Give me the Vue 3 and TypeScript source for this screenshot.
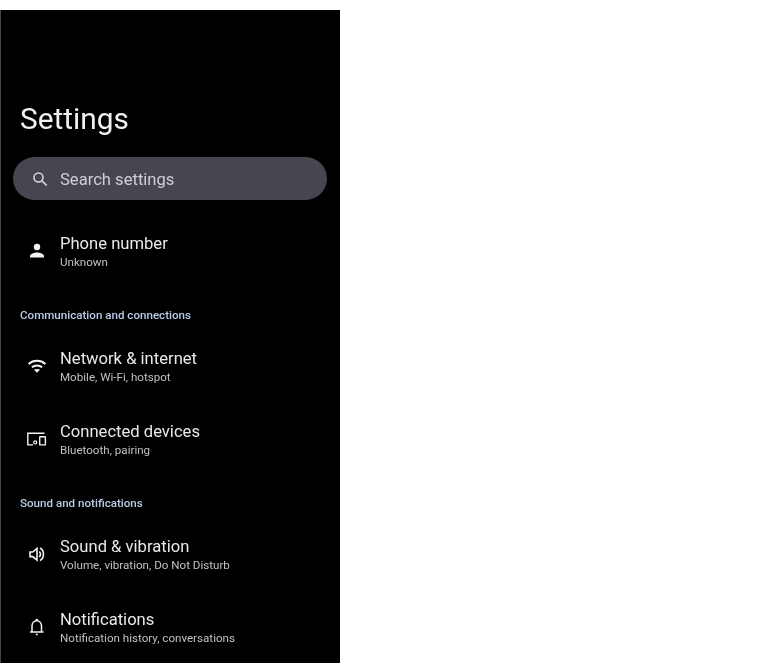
<script setup lang="ts">
interface Row { title: string; sub: string; icon: string }
const account: Row = { title: 'Phone number', sub: 'Unknown', icon: 'person' }
const groups: { label: string; rows: Row[] }[] = [
  { label: 'Communication and connections', rows: [
    { title: 'Network & internet', sub: 'Mobile, Wi-Fi, hotspot', icon: 'wifi' },
    { title: 'Connected devices', sub: 'Bluetooth, pairing', icon: 'devices' },
  ] },
  { label: 'Sound and notifications', rows: [
    { title: 'Sound & vibration', sub: 'Volume, vibration, Do Not Disturb', icon: 'sound' },
    { title: 'Notifications', sub: 'Notification history, conversations', icon: 'bell' },
  ] },
]
</script>

<template>
  <div class="page">
    <main class="phone">
      <h1 class="title">Settings</h1>
      <div class="search">
        <svg class="search-icon" viewBox="0 0 20 20" width="20" height="20" fill="none" stroke="#d6d6da" stroke-width="1.6">
          <circle cx="8.500" cy="8.500" r="4.500" />
          <path d="M11.800 11.800 16.800 16.500" />
        </svg>
        <span class="search-text">Search settings</span>
      </div>

      <div class="row first">
        <div class="icon"><svg viewBox="0 0 20 20" width="20" height="20" fill="#f4f4f6"><circle cx="10" cy="6" r="3.200" /><path d="M3 16.500v-1.300c0-2.400 4.500-3.600 7-3.600s7 1.200 7 3.600v1.300z" /></svg></div>
        <div class="text"><div class="row-title">{{ account.title }}</div><div class="row-sub">{{ account.sub }}</div></div>
      </div>

      <section v-for="g in groups" :key="g.label" class="group">
        <div class="label">{{ g.label }}</div>
        <div v-for="r in g.rows" :key="r.title" class="row">
          <div class="icon">
            <svg v-if="r.icon === 'wifi'" viewBox="0 0 20 20" width="20" height="20" fill="none" stroke="#f4f4f6" stroke-width="2">
              <path d="M1.600 8C6.300 3.700 13.700 3.700 18.400 8" />
              <path d="M4.900 11.300c2.900-2.500 7.300-2.500 10.200 0" />
              <path d="M10 16.800 7 13.800c1.700-1.200 4.300-1.200 6 0z" fill="#f4f4f6" stroke="none" />
            </svg>
            <svg v-else-if="r.icon === 'devices'" viewBox="0 0 20 20" width="20" height="20" fill="none" stroke="#f4f4f6" stroke-width="1.400">
              <path d="M17.500 4.200H.8v11.700H6" />
              <circle cx="8.200" cy="13.400" r="1.500" stroke-width="1.200" />
              <rect x="12.700" y="7.800" width="5.700" height="8.100" rx=".5" />
            </svg>
            <svg v-else-if="r.icon === 'sound'" viewBox="0 0 20 20" width="20" height="20" fill="none" stroke="#f4f4f6" stroke-width="1.600">
              <path d="M3 8v4.600h2.700L10 16V4.500L5.700 8z" />
              <path d="M12.300 7.500c1.300 1.500 1.300 4 0 5.500" />
              <path d="M13 4c4.600 2.600 4.600 10 0 12.600" />
            </svg>
            <svg v-else viewBox="0 0 20 20" width="20" height="20" fill="none" stroke="#f4f4f6" stroke-width="1.500">
              <path d="M3 15h13.500M5 15V9c0-3 2-5.300 4.700-5.300S14.500 6 14.500 9v6" />
              <path d="M9 3.200c.3-.8 1.300-.8 1.600 0M8.800 17.400h2" />
            </svg>
          </div>
          <div class="text"><div class="row-title">{{ r.title }}</div><div class="row-sub">{{ r.sub }}</div></div>
        </div>
      </section>
    </main>
  </div>
</template>

<style>
html, body { background: #fff; }
</style>

<style scoped>
.page { padding-top: 10px; height: 672px; box-sizing: border-box; background: #fff; font-family: Roboto, "Liberation Sans", sans-serif; }
.phone { width: 340px; height: 653px; background: #000; overflow: hidden; box-sizing: border-box; border-left: 1px solid #444; filter: blur(.3px); }
.title { margin: 91px 0 0 19px; font-size: 29.800px; line-height: 36px; font-weight: 400; color: #f1f1f3; }
.search { margin: 20px 13px 0 12px; height: 43px; border-radius: 22px; background: #45464f; display: flex; align-items: center; color: #cfcfd4; font-size: 16.600px; }
.search-icon { margin-left: 17px; margin-right: 10px; }
.search-text { padding-top: 2px; }
.row { height: 73px; display: flex; align-items: center; }
.row.first { margin-top: 14px; }
.icon { width: 20px; margin-left: 26px; margin-right: 13px; display: flex; justify-content: center; }
.text { padding-top: 2px; }
.row-title { font-size: 16.600px; line-height: 22px; color: #e9e9ec; }
.row-sub { font-size: 11.600px; line-height: 15px; color: #bfc0c6; }
.label { padding-left: 19px; font-size: 11.600px; font-weight: 500; line-height: 15px; color: #b9cbe8; margin-top: 21px; margin-bottom: 6px; }
</style>
